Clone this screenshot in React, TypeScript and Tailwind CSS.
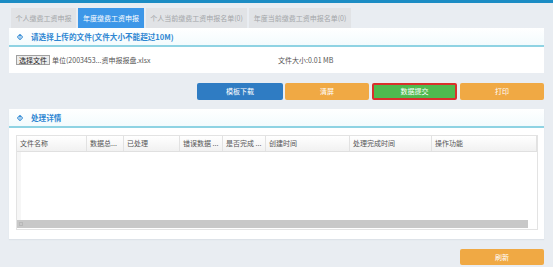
const tabs = [
  { label: '个人缴费工资申报', w: 'w-[65px]', active: false },
  { label: '年度缴费工资申报', w: 'w-[66px]', active: true },
  { label: '个人当前缴费工资申报名单(0)', w: 'w-[101px]', active: false },
  { label: '年度当前缴费工资申报名单(0)', w: 'w-[102px]', active: false },
];

const columns = [
  { label: '文件名称', w: 'w-[70px]' },
  { label: '数据总...', w: 'w-[37px]' },
  { label: '已处理', w: 'w-[56px]' },
  { label: '错误数据 ...', w: 'w-[43px]' },
  { label: '是否完成 ...', w: 'w-[43px]' },
  { label: '创建时间', w: 'w-[84px]' },
  { label: '处理完成时间', w: 'w-[82px]' },
  { label: '操作功能', w: 'flex-1' },
];

function Diamond() {
  return (
    <svg width="6" height="6" viewBox="0 0 8 8" className="shrink-0">
      <path d="M4 0.5 L7.5 4 L4 7.5 L0.5 4 Z" fill="none" stroke="#3b8fd6" strokeWidth="1.4" />
      <path d="M4 2.8 L5.2 4 L4 5.2 L2.8 4 Z" fill="#3b8fd6" />
    </svg>
  );
}

function PanelHeader({ title }: { title: string }) {
  return (
    <div className="flex h-[19px] items-center gap-[8px] border-b-[2px] border-[#8fd3e3] bg-gradient-to-b from-white to-[#f3fbfd] pl-[8px] text-[7.6px] font-bold text-[#2f86d2]">
      <Diamond />
      <span>{title}</span>
    </div>
  );
}

export default function App() {
  return (
    <div
      className="h-[267px] w-[553px] overflow-hidden border-t-[3px] border-[#1b8cc4] bg-[#e9edf2] text-[7px] text-[#555]"
      style={{ fontFamily: '"Noto Sans CJK SC", "Noto Sans", sans-serif' }}
    >
      {/* tabs */}
      <div className="mt-[5px] flex h-[20px] gap-[2px] pl-[11px]">
        {tabs.map((t) => (
          <div
            key={t.label}
            className={`${t.w} flex items-center justify-center ${
              t.active ? 'bg-[#3d97e8] text-white' : 'bg-[#e1e3e6] text-[#a3a6a9]'
            }`}
          >
            {t.label}
          </div>
        ))}
      </div>

      {/* upload panel */}
      <div className="ml-[9px] w-[535px] bg-white">
        <PanelHeader title="请选择上传的文件(文件大小不能超过10M)" />
        <div className="flex h-[26px] items-center pl-[7px]">
          <button className="flex h-[10px] w-[34px] items-center justify-center border border-[#a0a0a0] bg-[#ececec] text-[7px] text-[#222]">
            选择文件
          </button>
          <span className="ml-[2px] w-[226px] text-[#555]">单位(2003453...资申报报盘.xlsx</span>
          <span className="text-[#555]">文件大小:0.01 MB</span>
        </div>
      </div>

      {/* action buttons */}
      <div className="mt-[10px] flex h-[17px] w-[544px] justify-end gap-[2px]">
        <button className="w-[86px] rounded-[2px] bg-[#2f7cc3] text-white">模板下载</button>
        <button className="w-[84px] rounded-[2px] bg-[#f0a944] text-white">清屏</button>
        <button className="ml-[1px] w-[85px] rounded-[2px] border-[2px] border-[#d9302c] bg-[#4fba4f] text-white">
          数据提交
        </button>
        <button className="ml-[1px] w-[84px] rounded-[2px] bg-[#f0a944] text-white">打印</button>
      </div>

      {/* process details panel */}
      <div className="ml-[9px] mt-[9px] h-[130px] w-[535px] bg-white shadow-[0_1px_1px_#dde2e8]">
        <PanelHeader title="处理详情" />
        <div className="ml-[7px] mt-[7px] flex h-[95px] w-[522px] flex-col border border-[#e3e3e3]">
          <div className="flex h-[16px] border-b border-[#e0e0e0] bg-gradient-to-b from-white to-[#f1f1f1]">
            {columns.map((c) => (
              <div
                key={c.label}
                className={`${c.w} flex shrink-0 items-center border-r border-[#e2e2e2] pl-[3px] text-[#555]`}
              >
                {c.label}
              </div>
            ))}
          </div>
          <div className="flex-1 border-l-[4px] border-[#f6f6f6]" />
          <div className="mb-[1px] flex h-[8px] w-[511px] items-center bg-[#c8c8c8]">
            <div className="ml-[2px] h-[4px] w-[4px] border border-[#b8b8b8]" />
          </div>
        </div>
      </div>

      {/* refresh */}
      <div className="mt-[10px] flex w-[544px] justify-end">
        <button className="h-[16px] w-[84px] rounded-[2px] bg-[#f0a944] text-white">刷新</button>
      </div>
    </div>
  );
}
